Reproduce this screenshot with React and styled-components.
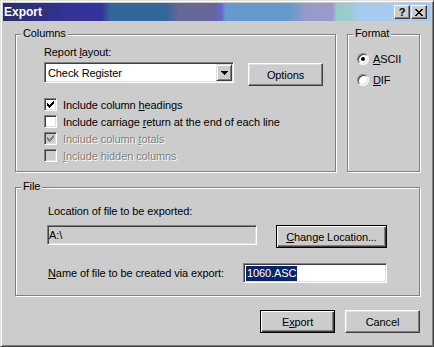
import styled, { createGlobalStyle } from "styled-components";

const face = "#cccccc";

const Global = createGlobalStyle`
  html, body { margin: 0; padding: 0; background: ${face}; }
  body {
    font-family: "Liberation Sans", Arial, sans-serif;
    font-size: 11px;
    letter-spacing: -0.1px;
    color: #000;
  }
  u { text-decoration: underline; text-underline-offset: 1px; }
`;

const Window = styled.div`
  width: 434px;
  height: 347px;
  box-sizing: border-box;
  background: ${face};
  border: 1px solid;
  border-color: #e0e0e0 #404040 #404040 #e0e0e0;
  box-shadow: inset 1px 1px #fff, inset -1px -1px #808080;
  padding: 2px;
  display: flex;
  flex-direction: column;
`;

const TitleBar = styled.div`
  height: 18px;
  display: flex;
  align-items: center;
  justify-content: space-between;
  padding: 0 4px 0 1px;
  background: linear-gradient(
    to right,
    #2a2e62 0%,
    #333399 16%,
    #333399 23%,
    #336699 25%,
    #336699 38%,
    #666699 41%,
    #666699 49%,
    #6666cc 51%,
    #6699cc 52%,
    #6699cc 67%,
    #9999cc 71%,
    #9999cc 77%,
    #99cccc 78%,
    #99cccc 81%,
    #a6caf0 83%,
    #a6caf0 100%
  );
`;

const Title = styled.span`
  color: #fff;
  font-weight: bold;
  font-size: 12px;
  letter-spacing: 0;
`;

const TitleButtons = styled.div`
  display: flex;
  gap: 1px;
`;

const TitleBtn = styled.span`
  width: 16px;
  height: 14px;
  box-sizing: border-box;
  background: ${face};
  border: 1px solid;
  border-color: #fff #404040 #404040 #fff;
  box-shadow: inset -1px -1px #808080;
  display: flex;
  align-items: center;
  justify-content: center;
  font-weight: bold;
  font-size: 11px;
  line-height: 1;
`;

const Body = styled.div`
  flex: 1;
  display: flex;
  flex-direction: column;
  padding: 13px 11px 0 12px;
`;

const TopRow = styled.div`
  display: flex;
  gap: 11px;
`;

const Group = styled.div`
  position: relative;
  box-sizing: border-box;
  width: ${(p) => p.$w}px;
  height: ${(p) => p.$h}px;
  padding: ${(p) => p.$pad};
  border: 1px solid #808080;
  box-shadow: inset 1px 1px #fff, 1px 1px #fff;
  display: flex;
  flex-direction: column;
  align-items: flex-start;
`;

const Legend = styled.span`
  position: absolute;
  top: -8px;
  left: 5px;
  padding: 0 2px;
  line-height: 13px;
  background: ${face};
`;

const Label = styled.span`
  line-height: 13px;
  padding-left: ${(p) => p.$indent || 0}px;
`;

const SelectRow = styled.div`
  display: flex;
  align-items: flex-start;
  margin-top: 3px;
`;

const Sunken = styled.div`
  box-sizing: border-box;
  width: ${(p) => p.$w}px;
  height: ${(p) => p.$h || 20}px;
  border: 1px solid;
  border-color: #808080 #fff #fff #808080;
  box-shadow: inset 1px 1px #404040, inset -1px -1px #dfdfdf;
  background: ${(p) => (p.$disabled ? face : "#fff")};
  display: flex;
  align-items: center;
  padding: 1px;
`;

const SelectText = styled.span`
  flex: 1;
  padding-left: 2px;
`;

const DropBtn = styled.span`
  width: 16px;
  height: 17px;
  box-sizing: border-box;
  background: ${face};
  border: 1px solid;
  border-color: #dfdfdf #404040 #404040 #dfdfdf;
  box-shadow: inset 1px 1px #fff, inset -1px -1px #808080;
  display: flex;
  align-items: center;
  justify-content: center;
`;

const Button = styled.button`
  font: inherit;
  letter-spacing: inherit;
  color: #000;
  background: ${face};
  width: ${(p) => p.$w}px;
  height: 23px;
  margin: ${(p) => p.$m || 0};
  padding: 0;
  box-sizing: border-box;
  border: 1px solid;
  border-color: ${(p) => (p.$default ? "#000" : "#fff #404040 #404040 #fff")};
  box-shadow: ${(p) =>
    p.$default
      ? "inset 1px 1px #fff, inset -1px -1px #404040, inset -2px -2px #808080"
      : "inset -1px -1px #808080, inset 1px 1px #dfdfdf"};
`;

const Checks = styled.div`
  margin-top: 10px;
  display: flex;
  flex-direction: column;
`;

const CheckRow = styled.div`
  height: 17px;
  display: flex;
  align-items: center;
  gap: 6px;
  color: ${(p) => (p.$disabled ? "#808080" : "#000")};
  text-shadow: ${(p) => (p.$disabled ? "1px 1px #fff" : "none")};
`;

const Box = styled.span`
  width: 13px;
  height: 13px;
  box-sizing: border-box;
  border: 1px solid;
  border-color: #808080 #fff #fff #808080;
  box-shadow: inset 1px 1px #404040, inset -1px -1px #dfdfdf;
  background: ${(p) => (p.$disabled ? face : "#fff")};
  display: flex;
  align-items: center;
  justify-content: center;
`;

const RadioRow = styled.div`
  height: 21px;
  display: flex;
  align-items: center;
  gap: 4px;
`;

const Radio = styled.span`
  width: 12px;
  height: 12px;
  box-sizing: border-box;
  border-radius: 50%;
  background: #fff;
  border: 1px solid;
  border-color: #808080 #fff #fff #808080;
  box-shadow: inset 1px 1px #404040, inset -1px -1px #dfdfdf;
  display: flex;
  align-items: center;
  justify-content: center;
  &::after {
    content: "";
    display: ${(p) => (p.$on ? "block" : "none")};
    width: 4px;
    height: 4px;
    border-radius: 50%;
    background: #000;
  }
`;

const FieldRow = styled.div`
  width: 100%;
  display: flex;
  align-items: ${(p) => p.$align || "flex-start"};
  justify-content: space-between;
  margin-top: ${(p) => p.$mt}px;
`;

const Selected = styled.span`
  background: #0a246a;
  color: #fff;
  line-height: 15px;
  padding: 0 1px;
  margin-left: 1px;
`;

const Footer = styled.div`
  display: flex;
  justify-content: flex-end;
  gap: 10px;
  margin-top: 14px;
`;

const Check = ({ color }) => (
  <svg width="7" height="7" viewBox="0 0 7 7" shapeRendering="crispEdges">
    <path
      fill={color}
      d="M0 2h1v3H0zM1 3h1v3H1zM2 4h1v3H2zM3 3h1v3H3zM4 2h1v3H4zM5 1h1v3H5zM6 0h1v3H6z"
    />
  </svg>
);

const CheckItem = ({ checked, disabled, children }) => (
  <CheckRow $disabled={disabled}>
    <Box $disabled={disabled}>{checked && <Check color={disabled ? "#808080" : "#000"} />}</Box>
    <span>{children}</span>
  </CheckRow>
);

export default function App() {
  return (
    <>
      <Global />
      <Window>
        <TitleBar>
          <Title>Export</Title>
          <TitleButtons>
            <TitleBtn>?</TitleBtn>
            <TitleBtn>
              <svg width="8" height="7" viewBox="0 0 8 7" shapeRendering="crispEdges">
                <path
                  fill="#000"
                  d="M0 0h2v1H0zM6 0h2v1H6zM1 1h2v1H1zM5 1h2v1H5zM2 2h4v1H2zM3 3h2v1H3zM2 4h4v1H2zM1 5h2v1H1zM5 5h2v1H5zM0 6h2v1H0zM6 6h2v1H6z"
                />
              </svg>
            </TitleBtn>
          </TitleButtons>
        </TitleBar>

        <Body>
          <TopRow>
            <Group $w={321} $h={138} $pad="11px 0 0 28px">
              <Legend>Columns</Legend>
              <Label>
                Report <u>l</u>ayout:
              </Label>
              <SelectRow>
                <Sunken $w={190} $h={21}>
                  <SelectText>Check Register</SelectText>
                  <DropBtn>
                    <svg width="7" height="4" viewBox="0 0 7 4" shapeRendering="crispEdges">
                      <path fill="#000" d="M0 0h7v1H0zM1 1h5v1H1zM2 2h3v1H2zM3 3h1v1H3z" />
                    </svg>
                  </DropBtn>
                </Sunken>
                <Button $w={75} $m="1px 0 0 14px">
                  Options
                </Button>
              </SelectRow>
              <Checks>
                <CheckItem checked>
                  Include column <u>h</u>eadings
                </CheckItem>
                <CheckItem>
                  Include carriage <u>r</u>eturn at the end of each line
                </CheckItem>
                <CheckItem checked disabled>
                  Include column <u>t</u>otals
                </CheckItem>
                <CheckItem disabled>
                  <u>I</u>nclude hidden columns
                </CheckItem>
              </Checks>
            </Group>

            <Group $w={73} $h={138} $pad="13px 0 0 9px">
              <Legend>Format</Legend>
              <RadioRow>
                <Radio $on />
                <span>
                  <u>A</u>SCII
                </span>
              </RadioRow>
              <RadioRow>
                <Radio />
                <span>
                  <u>D</u>IF
                </span>
              </RadioRow>
            </Group>
          </TopRow>

          <Group $w={405} $h={109} $pad="17px 32px 0 32px" style={{ marginTop: 15 }}>
            <Legend>File</Legend>
            <Label>Location of file to be exported:</Label>
            <FieldRow $mt={7}>
              <Sunken $w={210} $disabled style={{ marginLeft: -1 }}>
                <span>A:\</span>
              </Sunken>
              <Button $w={111} $default>
                <u>C</u>hange Location...
              </Button>
            </FieldRow>
            <FieldRow $mt={15} $align="center">
              <Label>
                <u>N</u>ame of file to be created via export:
              </Label>
              <Sunken $w={144}>
                <Selected>1060.ASC</Selected>
              </Sunken>
            </FieldRow>
          </Group>

          <Footer>
            <Button $w={75} $default>
              E<u>x</u>port
            </Button>
            <Button $w={75}>Cancel</Button>
          </Footer>
        </Body>
      </Window>
    </>
  );
}
